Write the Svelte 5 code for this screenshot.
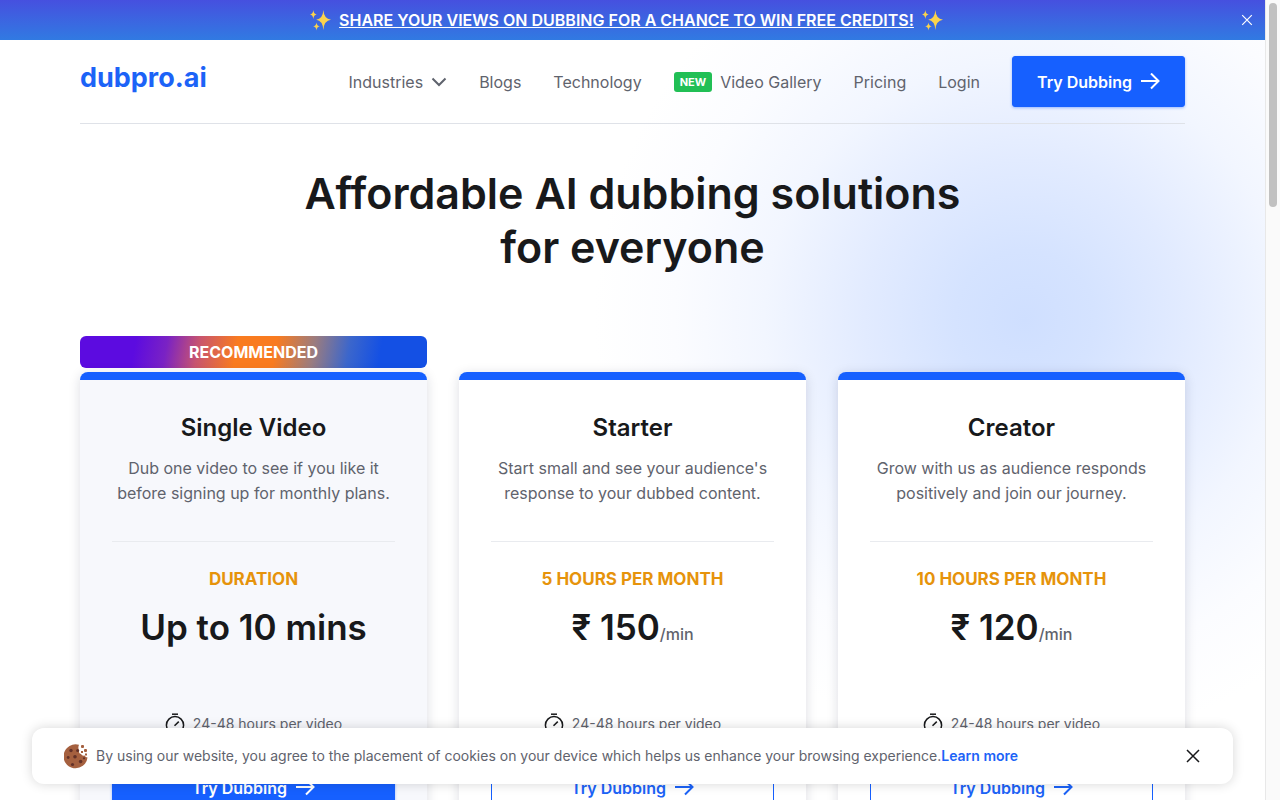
<script lang="ts">
	interface Plan {
		name: string;
		description: string[];
		label: string;
		price: string;
		unit?: string;
		recommended?: boolean;
	}

	const plans: Plan[] = [
		{
			name: 'Single Video',
			description: ['Dub one video to see if you like it', 'before signing up for monthly plans.'],
			label: 'DURATION',
			price: 'Up to 10 mins',
			recommended: true
		},
		{
			name: 'Starter',
			description: ["Start small and see your audience's", 'response to your dubbed content.'],
			label: '5 HOURS PER MONTH',
			price: '₹ 150',
			unit: '/min'
		},
		{
			name: 'Creator',
			description: ['Grow with us as audience responds', 'positively and join our journey.'],
			label: '10 HOURS PER MONTH',
			price: '₹ 120',
			unit: '/min'
		}
	];

	let showBanner = $state(true);
	let showCookies = $state(true);
</script>

{#snippet sparkles()}
	<svg class="sparkles" viewBox="0 0 22 22" aria-hidden="true">
		<path d="M14 0Q14.6 9.4 22 10.2Q14.6 11 14 21Q13.4 11 6.5 10.2Q13.4 9.4 14 0Z" />
		<path d="M3.5 0Q3.9 4.3 7 4.7Q3.9 5.1 3.5 9.4Q3.1 5.1 0 4.7Q3.1 4.3 3.5 0Z" />
		<path d="M6.8 13Q7.2 16.7 10.3 17.1Q7.2 17.5 6.8 21.5Q6.4 17.5 3.3 17.1Q6.4 16.7 6.8 13Z" />
	</svg>
{/snippet}

{#snippet arrow()}
	<svg class="arrow" viewBox="0 0 20 18" aria-hidden="true">
		<path d="M1 8H18.5M11 .5L18.5 8L11 15.5" />
	</svg>
{/snippet}

<div class="shell">
	<div class="page">
		{#if showBanner}
			<div class="banner">
				<div class="banner-text">
					{@render sparkles()}
					<a href="#survey">SHARE YOUR VIEWS ON DUBBING FOR A CHANCE TO WIN FREE CREDITS!</a>
					{@render sparkles()}
				</div>
				<button class="banner-close" aria-label="Close banner" onclick={() => (showBanner = false)}>
					<svg viewBox="0 0 10 10"><path d="M1 1L9 9M9 1L1 9" /></svg>
				</button>
			</div>
		{/if}

		<div class="container">
			<header>
				<a class="logo" href="#home">dubpro.ai</a>
				<nav>
					<button class="nav-item">
						Industries
						<svg class="chevron" viewBox="0 0 16 10" aria-hidden="true"><path d="M1.5 1.5L8 8L14.5 1.5" /></svg>
					</button>
					<a class="nav-item" href="#blogs">Blogs</a>
					<a class="nav-item" href="#technology">Technology</a>
					<a class="nav-item" href="#gallery"><span class="new">NEW</span>Video Gallery</a>
					<a class="nav-item" href="#pricing">Pricing</a>
					<a class="nav-item" href="#login">Login</a>
					<button class="btn btn-primary">Try Dubbing {@render arrow()}</button>
				</nav>
			</header>

			<main>
				<h1>Affordable AI dubbing solutions<br />for everyone</h1>
				<div class="plans">
					{#each plans as plan}
						<section class="plan">
							{#if plan.recommended}
								<div class="ribbon">RECOMMENDED</div>
							{/if}
							<div class="card" class:highlight={plan.recommended}>
								<h2>{plan.name}</h2>
								<p class="description">{plan.description[0]}<br />{plan.description[1]}</p>
								<div class="label">{plan.label}</div>
								<div class="price">{plan.price}{#if plan.unit}<span>{plan.unit}</span>{/if}</div>
								<div class="turnaround">
									<svg class="clock" viewBox="0 0 20 22" aria-hidden="true">
										<path d="M7 1.2H13" />
										<circle cx="10" cy="12.2" r="8.6" />
										<path d="M9.5 12.8L13.8 8.6" />
									</svg>
									24-48 hours per video
								</div>
								<button class="btn" class:btn-primary={plan.recommended} class:btn-outline={!plan.recommended}>
									Try Dubbing {@render arrow()}
								</button>
							</div>
						</section>
					{/each}
				</div>
			</main>
		</div>

		{#if showCookies}
			<div class="cookies">
				<svg class="cookie" viewBox="0 0 24 25" aria-hidden="true">
					<path
						fill="#a5603f"
						d="M15 .8A12 12 0 1 0 23.5 13.5Q21.5 13.5 20.6 11.6Q18 12.2 17 10Q14.2 9.6 15.2 6.8Q13.6 4 15 .8Z"
					/>
					<g fill="#a5603f">
						<rect x="17" y="1" width="3" height="3" rx="1" />
						<rect x="20" y="5" width="3" height="3" rx="1" />
						<rect x="17" y="7" width="2" height="2" />
						<rect x="21" y="9.5" width="2" height="2" />
					</g>
					<g fill="#633128">
						<circle cx="7" cy="6.5" r="1.7" />
						<circle cx="13.6" cy="6.5" r="1.5" />
						<circle cx="4.2" cy="13.5" r="1.4" />
						<circle cx="11" cy="12.8" r="1.8" />
						<circle cx="16.6" cy="17.5" r="1.8" />
						<circle cx="8.5" cy="20.5" r="1.6" />
						<circle cx="20" cy="14.3" r="1.1" />
					</g>
				</svg>
				<p>
					By using our website, you agree to the placement of cookies on your device which helps us enhance your
					browsing experience.<a href="#cookies">Learn more</a>
				</p>
				<button class="cookies-close" aria-label="Dismiss" onclick={() => (showCookies = false)}>
					<svg viewBox="0 0 14 14"><path d="M1 1L13 13M13 1L1 13" /></svg>
				</button>
			</div>
		{/if}
	</div>
	<div class="scrollbar"><div class="thumb"></div></div>
</div>

<style>
	:global(body) {
		margin: 0;
		background: #fff;
	}

	.shell {
		display: flex;
		height: 100vh;
		font-family: Inter, 'Liberation Sans', sans-serif;
		color: #18191b;
	}

	.page {
		position: relative;
		flex: 1;
		min-width: 0;
		overflow: hidden;
		background: radial-gradient(
			circle at 81% 320px,
			#cfdfff 0,
			#d5e3ff 70px,
			#e2ebff 160px,
			#f2f6ff 260px,
			#fbfcff 350px,
			#fff 430px
		);
	}

	.scrollbar {
		box-sizing: border-box;
		width: 15px;
		padding: 3px 3px 0;
		background: #fafafa;
		border-left: 1px solid #e8e8e8;
	}

	.thumb {
		height: 204px;
		border-radius: 4px;
		background: #c1c1c1;
	}

	button {
		font-family: inherit;
		cursor: pointer;
	}

	a {
		color: inherit;
		text-decoration: none;
	}

	svg {
		display: block;
		flex-shrink: 0;
		fill: none;
		stroke: currentColor;
	}

	.banner {
		display: flex;
		align-items: center;
		height: 40px;
		padding: 0 12px;
		background: linear-gradient(#4650df, #317ae2);
		color: #fff;
	}

	.banner-text {
		display: flex;
		flex: 1;
		align-items: center;
		justify-content: center;
		gap: 8px;
		font-size: 16px;
		font-weight: 600;
	}

	.banner-text a {
		text-decoration: underline;
	}

	.sparkles {
		width: 21px;
		height: 21px;
		fill: #fbd34d;
		stroke: none;
	}

	.banner-close {
		padding: 0;
		border: none;
		background: none;
		color: #fff;
	}

	.banner-close svg {
		width: 12px;
		height: 12px;
	}

	.container {
		padding: 0 80px;
	}

	header {
		display: flex;
		justify-content: space-between;
		padding: 16px 0;
		border-bottom: 1px solid #dfe2e8;
	}

	.logo {
		font-size: 27px;
		line-height: 44px;
		font-weight: 700;
		color: #1c63f7;
	}

	nav {
		display: flex;
		align-items: center;
		gap: 32px;
	}

	.nav-item {
		display: flex;
		align-items: center;
		gap: 8px;
		padding: 0;
		border: none;
		background: none;
		font-size: 16px;
		line-height: 24px;
		color: #5f636d;
	}

	.chevron {
		width: 16px;
		height: 10px;
		stroke-width: 2;
	}

	.new {
		padding: 0 6px;
		border-radius: 3px;
		background: #21bf55;
		color: #fff;
		font-size: 11px;
		line-height: 20px;
		font-weight: 700;
	}

	.btn {
		display: flex;
		align-items: center;
		justify-content: center;
		gap: 8px;
		box-sizing: border-box;
		height: 51px;
		padding: 0 24px;
		border: 1px solid #1660ff;
		border-radius: 3px;
		font-size: 16px;
		font-weight: 600;
	}

	.btn-primary {
		background: #1660ff;
		color: #fff;
		box-shadow: 0 1px 3px rgba(22, 96, 255, 0.4);
	}

	.btn-outline {
		background: #fff;
		color: #1c63f7;
	}

	.arrow {
		width: 20px;
		height: 18px;
		stroke-width: 2;
	}

	h1 {
		margin: 42px 0 62px;
		font-size: 43px;
		line-height: 54px;
		font-weight: 600;
		text-align: center;
	}

	.plans {
		display: grid;
		grid-template-columns: repeat(3, 1fr);
		align-items: end;
		gap: 32px;
		text-align: center;
	}

	.ribbon {
		margin-bottom: 4px;
		border-radius: 6px;
		background: linear-gradient(
			100deg,
			#5c0be0 0,
			#5c0be0 16%,
			#7a22c4 25%,
			#c75470 34%,
			#f97b20 45%,
			#f97b20 56%,
			#9a7c80 67%,
			#3b66cc 77%,
			#1450e4 86%,
			#1450e4 100%
		);
		color: #fff;
		font-size: 16px;
		line-height: 32px;
		font-weight: 700;
	}

	.card {
		padding: 32px 32px 40px;
		border-top: 8px solid #1660ff;
		border-radius: 8px;
		background: #fff;
		box-shadow: 0 2px 12px rgba(20, 30, 60, 0.15);
	}

	.highlight {
		background: #f7f8fc;
	}

	h2 {
		margin: 0;
		font-size: 24px;
		line-height: 32px;
		font-weight: 600;
	}

	.description {
		margin: 12px 0 25px;
		padding-bottom: 35px;
		border-bottom: 1px solid #e9ebef;
		font-size: 16px;
		line-height: 25px;
		color: #5f636d;
		white-space: nowrap;
	}

	.label {
		color: #e6930b;
		font-size: 17px;
		line-height: 24px;
		font-weight: 700;
	}

	.price {
		margin: 12px 0 61px;
		font-size: 35px;
		line-height: 48px;
		font-weight: 600;
	}

	.price span {
		font-size: 16px;
		line-height: 1;
		font-weight: 500;
		color: #5f636d;
	}

	.turnaround {
		display: flex;
		align-items: center;
		justify-content: center;
		gap: 8px;
		margin-bottom: 26px;
		font-size: 14px;
		line-height: 24px;
		color: #5f636d;
	}

	.clock {
		width: 20px;
		height: 22px;
		stroke: #18191b;
		stroke-width: 1.5;
	}

	.card .btn {
		width: 100%;
	}

	.cookies {
		position: absolute;
		right: 32px;
		bottom: 16px;
		left: 32px;
		display: flex;
		align-items: center;
		gap: 8px;
		height: 56px;
		padding: 0 32px;
		box-sizing: border-box;
		border-radius: 12px;
		background: #fff;
		box-shadow: 0 0 12px rgba(0, 0, 0, 0.16);
	}

	.cookie {
		width: 24px;
		height: 25px;
		stroke: none;
	}

	.cookies p {
		flex: 1;
		margin: 0;
		font-size: 14px;
		line-height: 24px;
		color: #5f636d;
	}

	.cookies p a {
		color: #1c63f7;
		font-weight: 600;
	}

	.cookies-close {
		padding: 1px;
		border: none;
		background: none;
		color: #18191b;
	}

	.cookies-close svg {
		width: 14px;
		height: 14px;
		stroke-width: 1.5;
	}
</style>
